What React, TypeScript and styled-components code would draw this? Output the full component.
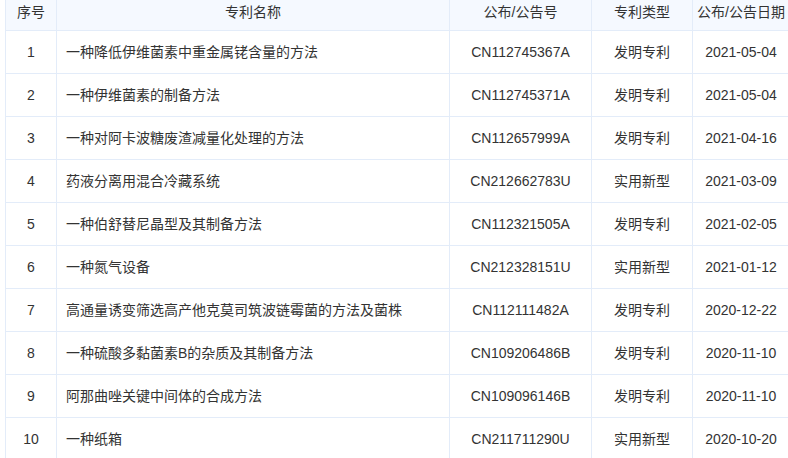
import * as React from "react";
import { default as styled, createGlobalStyle } from "styled-components";

interface Patent {
  name: string;
  number: string;
  kind: string;
  date: string;
}

const patents: Patent[] = [
  { name: "一种降低伊维菌素中重金属铑含量的方法", number: "CN112745367A", kind: "发明专利", date: "2021-05-04" },
  { name: "一种伊维菌素的制备方法", number: "CN112745371A", kind: "发明专利", date: "2021-05-04" },
  { name: "一种对阿卡波糖废渣减量化处理的方法", number: "CN112657999A", kind: "发明专利", date: "2021-04-16" },
  { name: "药液分离用混合冷藏系统", number: "CN212662783U", kind: "实用新型", date: "2021-03-09" },
  { name: "一种伯舒替尼晶型及其制备方法", number: "CN112321505A", kind: "发明专利", date: "2021-02-05" },
  { name: "一种氮气设备", number: "CN212328151U", kind: "实用新型", date: "2021-01-12" },
  { name: "高通量诱变筛选高产他克莫司筑波链霉菌的方法及菌株", number: "CN112111482A", kind: "发明专利", date: "2020-12-22" },
  { name: "一种硫酸多黏菌素B的杂质及其制备方法", number: "CN109206486B", kind: "发明专利", date: "2020-11-10" },
  { name: "阿那曲唑关键中间体的合成方法", number: "CN109096146B", kind: "发明专利", date: "2020-11-10" },
  { name: "一种纸箱", number: "CN211711290U", kind: "实用新型", date: "2020-10-20" },
];

const GlobalStyle = createGlobalStyle`
  html, body {
    margin: 0;
    padding: 0;
    background: #ffffff;
  }
  body {
    font-family: "Liberation Sans", "Noto Sans CJK SC", sans-serif;
    font-size: 14px;
    color: #333333;
  }
`;

const Page = styled.div`
  width: 788px;
  height: 458px;
  overflow: hidden;
  padding-left: 5px;
  box-sizing: border-box;
`;

const Table = styled.div`
  width: 784px;
  display: flex;
  flex-direction: column;
`;

interface RowProps {
  head?: boolean;
}

const Row = styled.div`
  display: grid;
  grid-template-columns: 51px 393px 142px 101px 97px;
  height: ${(props: RowProps) => (props.head ? "31px" : "43px")};
  background: ${(props: RowProps) => (props.head ? "#f5f9ff" : "#ffffff")};
`;

interface CellProps {
  left?: boolean;
  head?: boolean;
}

const Cell = styled.div`
  display: flex;
  align-items: center;
  justify-content: ${(props: CellProps) => (props.left ? "flex-start" : "center")};
  padding: ${(props: CellProps) =>
    props.head ? "0 0 6px 0" : props.left ? "0 0 0 9px" : "0"};
  border-left: 1px solid #e3ecf9;
  border-bottom: 1px solid #e3ecf9;
  white-space: nowrap;
  line-height: 16px;
  box-sizing: border-box;
`;

const App = () => {
  return (
    <Page>
      <GlobalStyle />
      <Table>
        <Row head>
          <Cell head>序号</Cell>
          <Cell head>专利名称</Cell>
          <Cell head>公布/公告号</Cell>
          <Cell head>专利类型</Cell>
          <Cell head>公布/公告日期</Cell>
        </Row>
        {patents.map((p, i) => (
          <Row key={p.number}>
            <Cell>{i + 1}</Cell>
            <Cell left>{p.name}</Cell>
            <Cell>{p.number}</Cell>
            <Cell>{p.kind}</Cell>
            <Cell>{p.date}</Cell>
          </Row>
        ))}
      </Table>
    </Page>
  );
};

export default App;
